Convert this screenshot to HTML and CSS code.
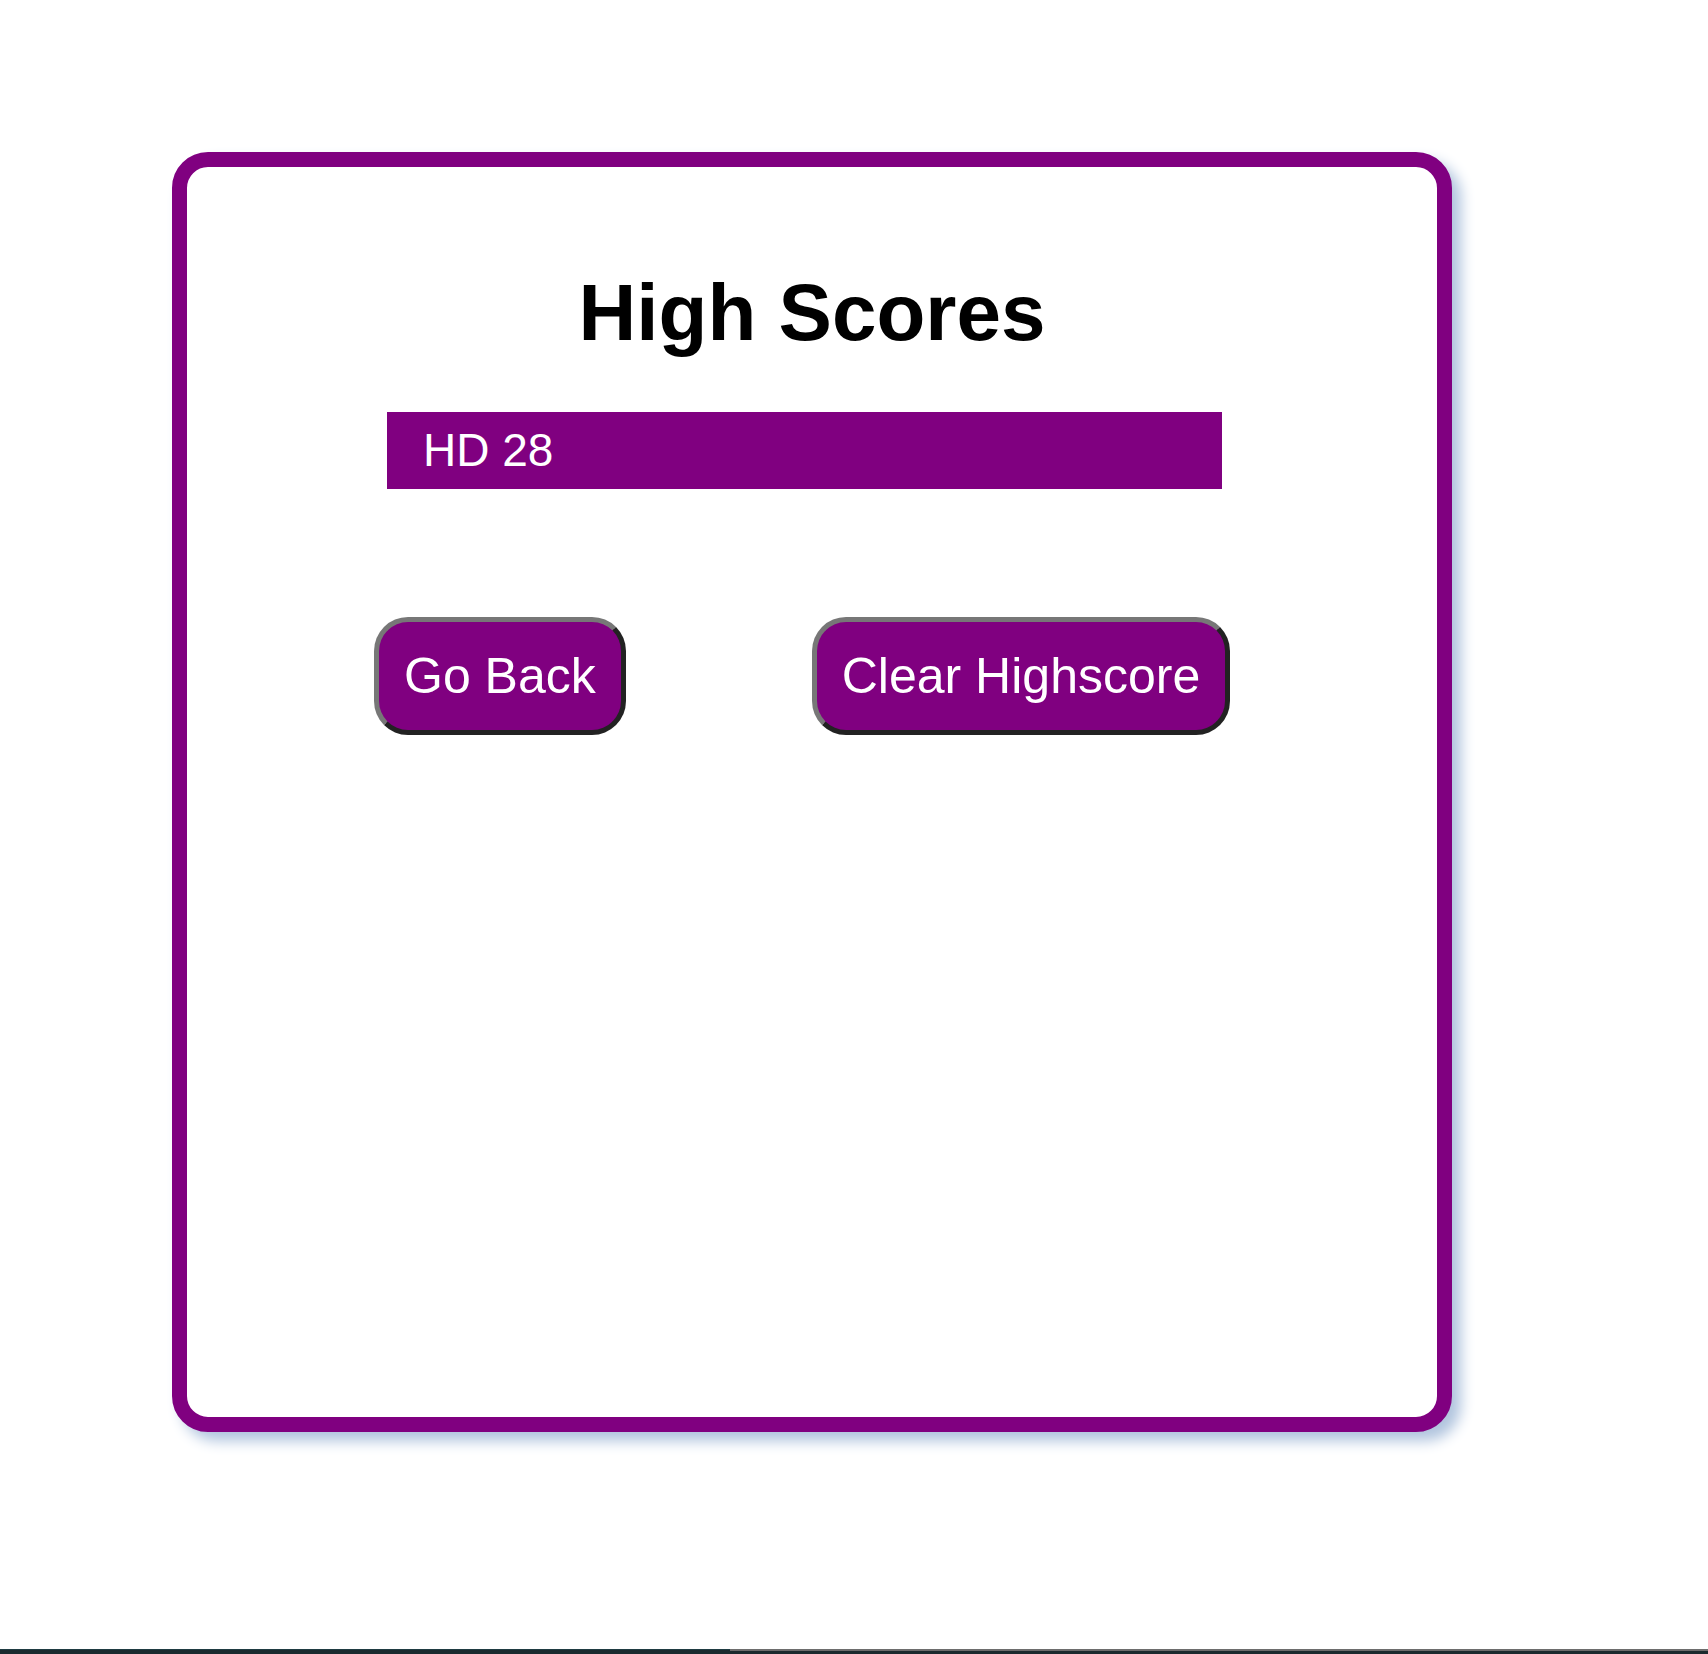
FILE: index.html
```html
<!DOCTYPE html>
<html lang="en">
<head>
<meta charset="utf-8">
<title>High Scores</title>
<link rel="stylesheet" href="styles.css">
</head>
<body>
<main class="page">
  <section class="card">
    <h1 class="title">High Scores</h1>
    <ol class="scores">
      <li class="score">HD 28</li>
    </ol>
    <div class="actions">
      <button class="btn" type="button">Go Back</button>
      <button class="btn" type="button">Clear Highscore</button>
    </div>
  </section>
</main>
<div class="edge">
  <div class="edge-left"></div>
  <div class="edge-right"></div>
</div>
</body>
</html>
```
FILE: styles.css
```css
html, body {
  margin: 0;
  padding: 0;
  background: #ffffff;
  font-family: "Liberation Sans", Arial, Helvetica, sans-serif;
}

.page {
  padding: 152px 0 0 172px;
  height: 1654px;
  box-sizing: border-box;
}

.card {
  box-sizing: border-box;
  width: 1280px;
  height: 1280px;
  border: 15px solid #800080;
  border-radius: 36px;
  box-shadow: 9px 9px 14px #b0c4de;
  background: #ffffff;
  display: flex;
  flex-direction: column;
}

.title {
  margin: 100px 0 0 0;
  font-size: 80px;
  line-height: 92px;
  font-weight: 700;
  text-align: center;
  color: #000000;
}

.scores {
  list-style: none;
  margin: 53px 0 0 200px;
  padding: 0;
  width: 835px;
}

.score {
  height: 77px;
  line-height: 77px;
  background: #800080;
  color: #ffffff;
  font-size: 46px;
  padding-left: 36px;
}

.actions {
  display: flex;
  gap: 186px;
  margin: 128px 0 0 187px;
}

.btn {
  font-family: "Liberation Sans", Arial, Helvetica, sans-serif;
  font-size: 50px;
  line-height: 58px;
  color: #ffffff;
  background: #800080;
  padding: 25px 25px;
  border-width: 5px;
  border-style: solid;
  border-color: #777777 #222222 #222222 #777777;
  border-radius: 34px;
  cursor: pointer;
}

.edge {
  position: fixed;
  left: 0;
  right: 0;
  bottom: 0;
  height: 5px;
  display: flex;
}

.edge-left {
  width: 730px;
  background: #1a2b2f;
  border-top: 1px solid #1f3b42;
}

.edge-right {
  flex: 1;
  background: #1b2a2e;
  border-top: 2px solid #6d6d6d;
}
```
